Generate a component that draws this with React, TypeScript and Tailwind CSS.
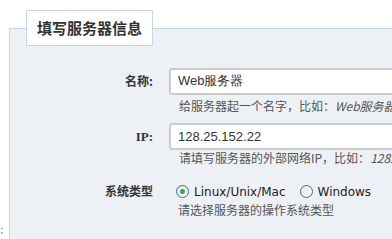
import React, { useState } from 'react';

const cjk = "font-['Noto_Sans_CJK_SC',sans-serif]";

function Radio({ checked, label, onClick }: { checked: boolean; label: string; onClick: () => void }) {
  return (
    <button type="button" onClick={onClick} className="flex items-center gap-[5px]">
      <span className="flex h-[13px] w-[13px] items-center justify-center rounded-full border border-[#3a6a9c] bg-gradient-to-br from-[#e6e6e6] to-white">
        {checked && <span className="h-[5px] w-[5px] rounded-full bg-[#2fb33a]" />}
      </span>
      <span className="font-['DejaVu_Sans',sans-serif] text-[12px] text-[#222]">{label}</span>
    </button>
  );
}

export default function App() {
  const [name, setName] = useState('Web服务器');
  const [ip, setIp] = useState('128.25.152.22');
  const [os, setOs] = useState<'unix' | 'windows'>('unix');

  return (
    <div className="flex h-[239px] w-[392px] overflow-hidden bg-white">
      {/* stray mark at the left edge */}
      <div className="flex w-[9px] shrink-0 items-end pb-[4px] pl-[1px]">
        <span className="text-[8px] leading-[10px] text-[#333]">;</span>
      </div>

      <fieldset className="mt-[10px] h-[300px] w-[500px] shrink-0 border-l border-t border-[#c6d5e9] bg-[#edf1f6] pl-[16px]">
        <legend className={`flex h-[36px] w-[127px] items-center justify-center border border-[#c6d5e9] bg-white text-[15px] font-bold text-[#333] ${cjk}`}>
          填写服务器信息
        </legend>

        <div className="-ml-[16px] mt-[21px] grid grid-cols-[143px_1fr] items-start gap-x-[16px]">
          {/* 名称 */}
          <label className={`h-[27px] text-right text-[12px] font-bold leading-[27px] text-[#333] ${cjk}`}>名称:</label>
          <div>
            <input
              value={name}
              onChange={(e) => setName(e.target.value)}
              className="h-[27px] w-[300px] rounded-[3px] border-2 border-[#cbcbcb] bg-white px-[7px] font-['Liberation_Sans',sans-serif] text-[13px] text-[#333] outline-none"
            />
            <p className={`mt-[3px] mb-[9px] whitespace-nowrap pl-[10px] text-[12px] leading-[16px] text-[#555] ${cjk}`}>
              给服务器起一个名字，比如：<i>Web服务器</i>
            </p>
          </div>

          {/* IP */}
          <label className="h-[27px] text-right font-['Liberation_Serif',serif] text-[13px] font-bold leading-[27px] text-[#333]">IP:</label>
          <div>
            <input
              value={ip}
              onChange={(e) => setIp(e.target.value)}
              className="h-[27px] w-[300px] rounded-[3px] border-2 border-[#cbcbcb] bg-white px-[7px] font-['Liberation_Sans',sans-serif] text-[13px] text-[#333] outline-none"
            />
            <p className={`whitespace-nowrap pl-[10px] text-[12px] leading-[16px] text-[#555] ${cjk}`}>
              请填写服务器的外部网络IP，比如：<i>128.25.152.22</i>
            </p>
          </div>

          {/* 系统类型 */}
          <label className={`mt-[16px] h-[20px] text-right text-[12px] font-bold leading-[18px] text-[#333] ${cjk}`}>系统类型</label>
          <div className="mt-[16px]">
            <div className="flex h-[20px] items-center gap-[14px] pl-[7px]">
              <Radio checked={os === 'unix'} label="Linux/Unix/Mac" onClick={() => setOs('unix')} />
              <Radio checked={os === 'windows'} label="Windows" onClick={() => setOs('windows')} />
            </div>
            <p className={`whitespace-nowrap pl-[9px] text-[12px] leading-[16px] text-[#555] ${cjk}`}>
              请选择服务器的操作系统类型
            </p>
          </div>
        </div>
      </fieldset>
    </div>
  );
}
